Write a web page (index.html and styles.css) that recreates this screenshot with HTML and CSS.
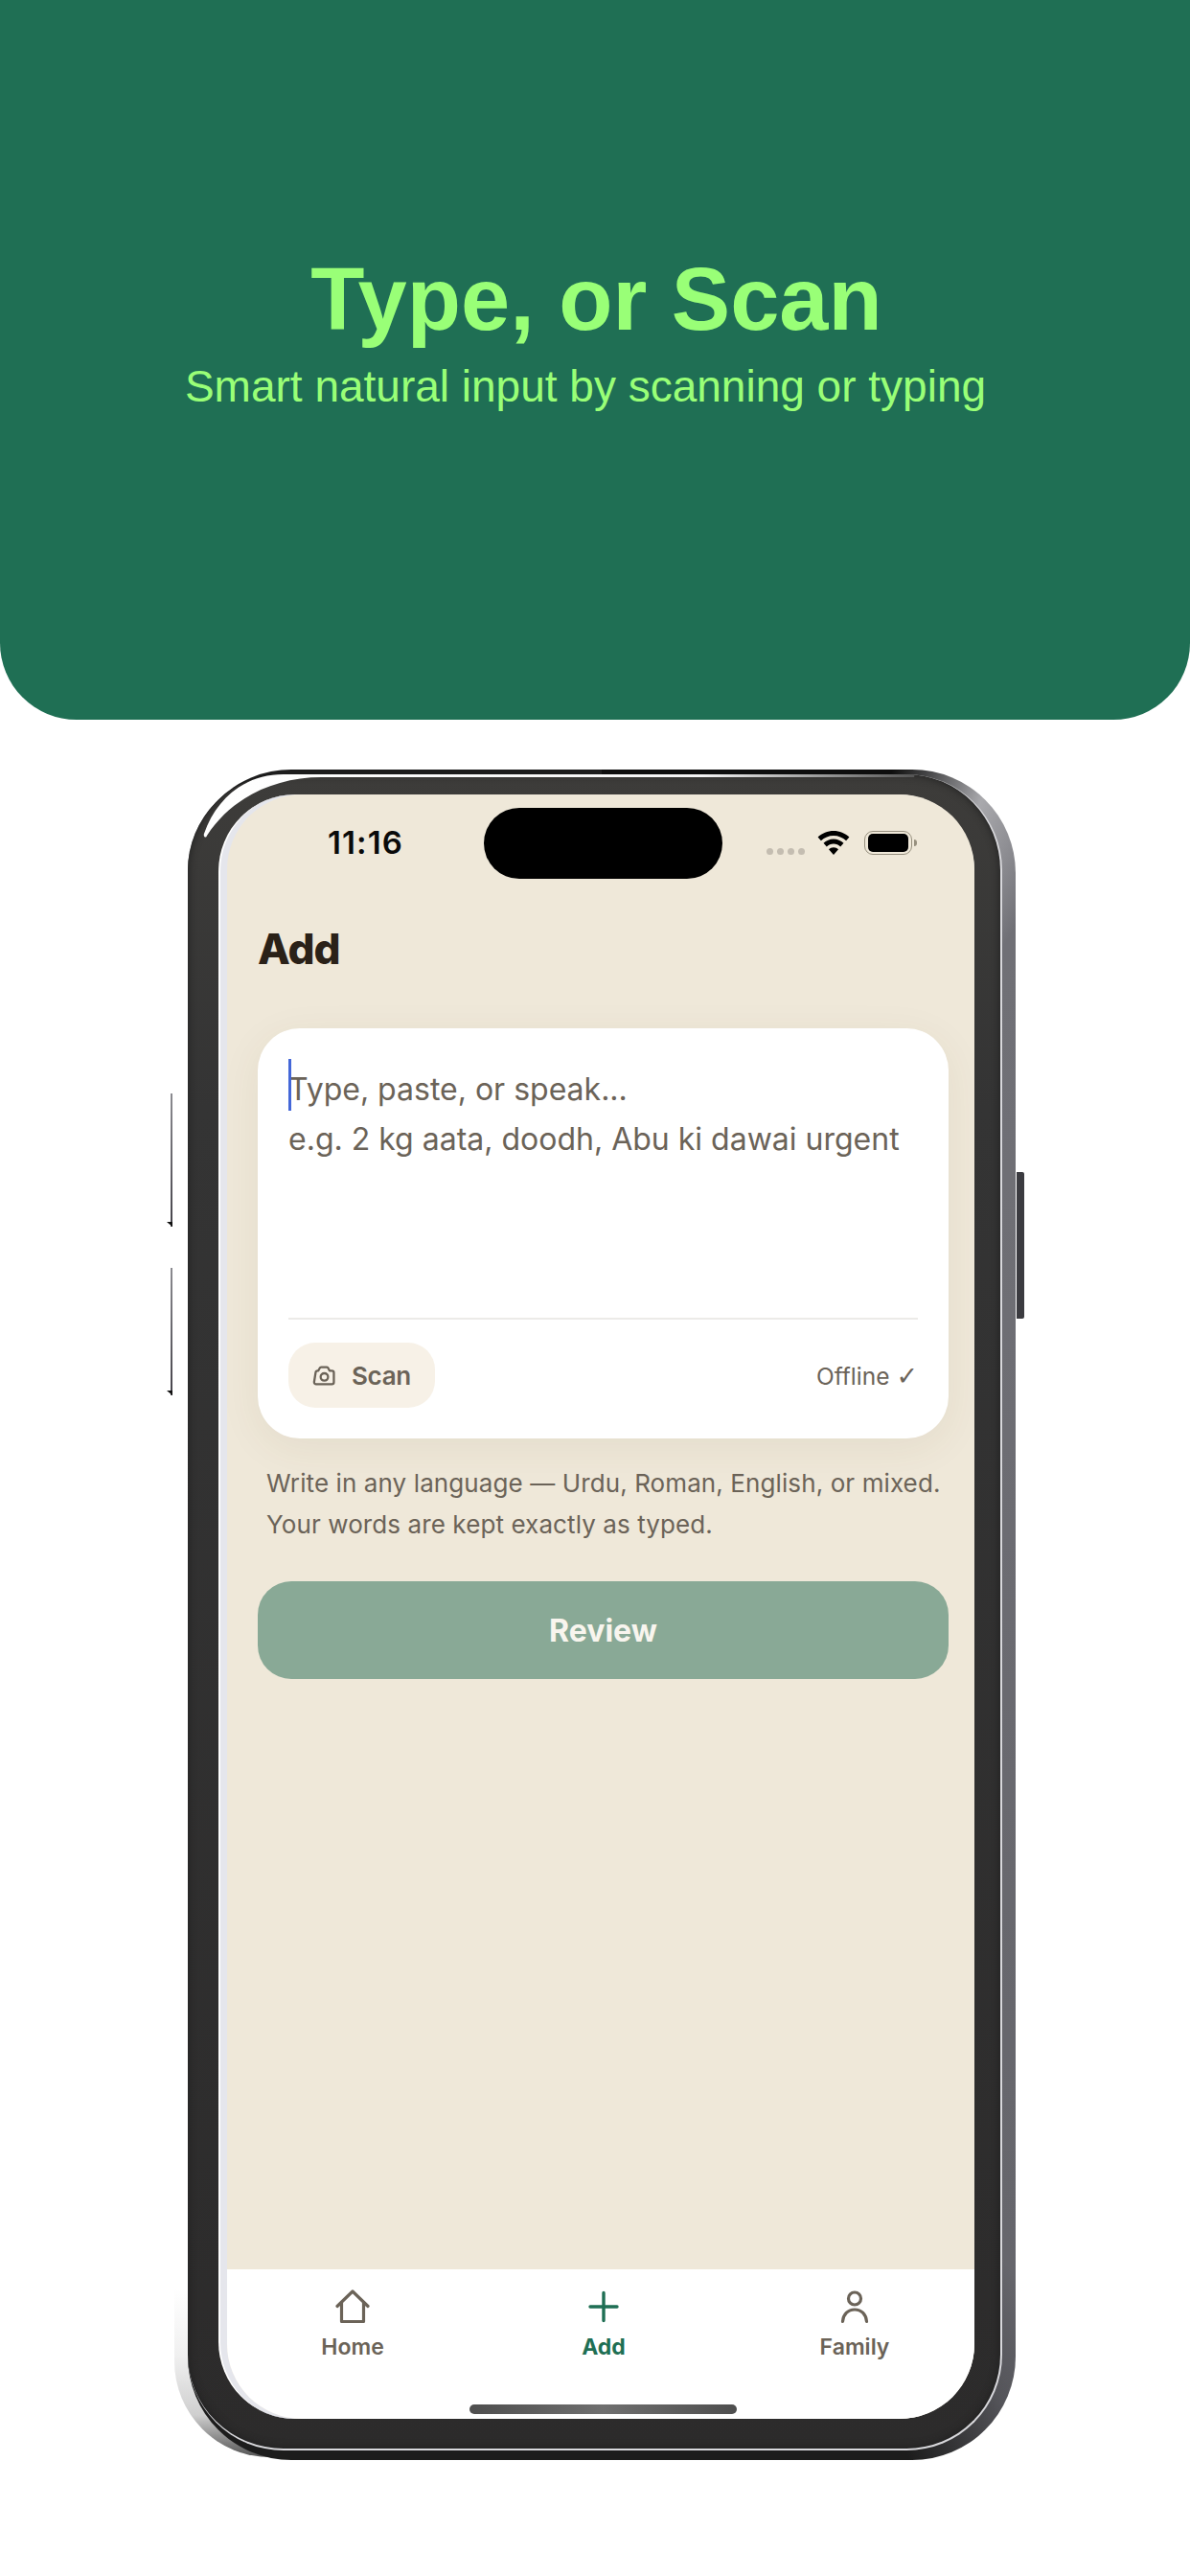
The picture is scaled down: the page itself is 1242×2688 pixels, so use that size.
FILE: index.html
```html
<!DOCTYPE html>
<html lang="en">
<head>
<meta charset="utf-8">
<title>Type, or Scan</title>
<link rel="stylesheet" href="styles.css">
</head>
<body>
<header class="hero">
  <h1 class="hero-title">Type, or Scan</h1>
  <p class="hero-sub">Smart natural input by scanning or typing</p>
</header>
<div class="phone">
  <div class="phone-halo"></div>
  <span class="side-btn side-btn-a"></span>
  <span class="side-btn side-btn-b"></span>
  <span class="power-btn"></span>
  <div class="rim">
    <div class="screen">
      <div class="display">
        <div class="status">
          <span class="time">11:16</span>
          <span class="island"></span>
          <span class="dots"><i></i><i></i><i></i><i></i></span>
          <svg class="wifi" viewBox="0 0 34 25"><path d="M17 0C10.700 0 5 2.400 .6 6.600l3.300 3.700C7.400 7 12 5 17 5s9.600 2 13.100 5.300l3.300-3.700C29 2.400 23.300 0 17 0z"/><path d="M17 8.600c-4 0-7.700 1.600-10.500 4.200l3.300 3.700c1.900-1.800 4.400-2.900 7.200-2.900s5.300 1.100 7.200 2.900l3.300-3.700C24.700 10.200 21 8.600 17 8.600z"/><path d="M17 17.300c-2 0-3.700.7-5 2l5 5.700 5-5.700c-1.300-1.300-3-2-5-2z"/></svg>
          <span class="battery"><i class="battery-fill"></i></span>
          <span class="battery-nub"></span>
        </div>
        <main class="page">
          <h2 class="page-title">Add</h2>
          <section class="card">
            <div class="entry">
              <span class="caret"></span>
              <p class="entry-line">Type, paste, or speak...</p>
              <p class="entry-line">e.g. 2 kg aata, doodh, Abu ki dawai urgent</p>
            </div>
            <div class="card-foot">
              <span class="scan-btn">
                <svg class="cam" viewBox="0 0 23 20" fill="none" stroke="currentColor" stroke-width="2.200" stroke-linejoin="round"><path d="M4 18.500h15.500a2 2 0 0 0 2-2V7a2 2 0 0 0-2-2h-2.300l-1.400-2.700a1.300 1.300 0 0 0-1.200-.8H8.800a1.600 1.600 0 0 0-1.400.9L6 5H5.300a2 2 0 0 0-2 1.700L1.800 16.200a2 2 0 0 0 2.200 2.300z"/><circle cx="12" cy="11.300" r="3.700"/></svg>
                <span>Scan</span>
              </span>
              <span class="offline">Offline <span class="tick">✓</span></span>
            </div>
          </section>
          <p class="hint">Write in any language — Urdu, Roman, English, or mixed.<br>Your words are kept exactly as typed.</p>
          <button class="review">Review</button>
        </main>
        <nav class="tabs">
          <div class="tab">
            <svg class="tab-icon" viewBox="0 0 38 36" fill="none" stroke="currentColor" stroke-width="3.200" stroke-linecap="round" stroke-linejoin="round"><path d="M3 17.500 19 2l16 15.500M7.500 14v19.500h23V14"/></svg>
            <span>Home</span>
          </div>
          <div class="tab tab-on">
            <svg class="tab-icon" viewBox="0 0 38 36" fill="none" stroke="currentColor" stroke-width="3.400" stroke-linecap="round"><path d="M19 3.500v29M5 18h28"/></svg>
            <span>Add</span>
          </div>
          <div class="tab">
            <svg class="tab-icon" viewBox="0 0 38 36" fill="none" stroke="currentColor" stroke-width="3.200" stroke-linecap="round"><circle cx="19" cy="9.500" r="6.500"/><path d="M6.500 33.500C7 26 12 21 19 21s12 5 12.500 12.500"/></svg>
            <span>Family</span>
          </div>
        </nav>
        <span class="home-bar"></span>
      </div>
    </div>
    <svg class="glint" viewBox="0 0 850 80" preserveAspectRatio="none"><defs><linearGradient id="gl" x1="0" x2="1" y1="0" y2="0"><stop offset="0" stop-color="#fff"/><stop offset=".7" stop-color="#f4f4f4"/><stop offset="1" stop-color="#555"/></linearGradient></defs><path d="M17 62C30 25 60 0 100 0H760V3H140C90 3 45 25 20 64c-1 3-4 1-3-2z" fill="url(#gl)"/></svg>
  </div>
</div>
</body>
</html>
```
FILE: styles.css
```css
* { box-sizing: border-box; }
html, body { margin: 0; padding: 0; }
body {
  width: 1242px;
  height: 2688px;
  background: #fff;
  overflow: hidden;
  font-family: Inter, "Noto Sans", sans-serif;
}

/* hero */
.hero {
  height: 751px;
  background: #1f6f54;
  border-radius: 0 0 80px 80px;
  padding-top: 262px;
  text-align: center;
  color: #99ff77;
  font-family: "Liberation Sans", Arial, sans-serif;
}
.hero-title {
  margin: 0;
  padding-left: 3px;
  font-size: 92px;
  line-height: 100px;
  font-weight: 700;
}
.hero-sub {
  margin: 13px 0 0;
  padding-right: 20px;
  font-size: 46px;
  line-height: 56px;
  font-weight: 400;
}

/* device */
.phone {
  position: relative;
  width: 864px;
  height: 1764px;
  margin: 52px 0 0 196px;
  padding: 5px 14px 10px 0;
  border-radius: 108px;
  background: conic-gradient(#0e0e0e 0 19deg, #a9a9ad 25deg, #707076 31deg, #66666c 148deg, #55555a 153deg, #1c1c1c 160deg, #1c1c1c 360deg);
}
.phone-halo {
  position: absolute;
  z-index: -1;
  left: -14px;
  top: 0;
  bottom: 3px;
  width: 300px;
  border-radius: 108px 0 0 100px;
  background: linear-gradient(to bottom, #fff 0, #fff 90%, #f0f0f0 94%, #cfcfcf 97.500%, #555 100%);
}
.side-btn {
  position: absolute;
  left: -18px;
  width: 2px;
  background: linear-gradient(to bottom, #8b8b90, #45434a);
}
.side-btn::after {
  content: "";
  position: absolute;
  left: -4px;
  bottom: 0;
  border-style: solid;
  border-width: 0 6px 5px 0;
  border-color: transparent #111 transparent transparent;
}
.side-btn-a { top: 338px; height: 139px; }
.side-btn-b { top: 520px; height: 133px; }
.power-btn {
  position: absolute;
  left: 865px;
  top: 420px;
  width: 8px;
  height: 153px;
  border-radius: 0 2px 2px 0;
  background: #3b3b40;
}
.rim {
  position: relative;
  height: 100%;
  padding: 21px 27px 31px 32px;
  border-radius: 100px;
  border-bottom: 2px solid #d8d8dc;
  border-right: 2px solid #d8d8dc;
  background: linear-gradient(to bottom, #3d3c3a, #343434 20%, #2c2b2b);
  box-shadow: inset 0 0 8px #1e1e1e;
}
.glint {
  position: absolute;
  left: 0;
  top: 0;
  width: 100%;
  height: 80px;
}
.screen {
  height: 100%;
  padding-left: 9px;
  border-radius: 80px;
  border-left: 2px solid #fff;
  background: #e5e6ec;
}
.display {
  position: relative;
  display: flex;
  flex-direction: column;
  height: 100%;
  margin-left: -2px;
  border-radius: 78px;
  overflow: hidden;
  background: #efe8d9;
}

/* status bar */
.status {
  display: flex;
  align-items: flex-start;
  height: 110px;
  padding: 14px 0 0 105px;
}
.time {
  width: 163px;
  margin-top: 16px;
  font-size: 33px;
  line-height: 40px;
  font-weight: 600;
  letter-spacing: 1.100px;
  color: #0a0a0a;
}
.island {
  flex: none;
  width: 249px;
  height: 74px;
  border-radius: 37px;
  background: #000;
}
.dots {
  display: flex;
  gap: 4px;
  margin: 42px 0 0 46px;
}
.dots i {
  width: 7px;
  height: 7px;
  border-radius: 50%;
  background: #c4bdb1;
}
.wifi {
  width: 34px;
  height: 25px;
  margin: 24px 0 0 13px;
  fill: #000;
}
.battery {
  width: 50px;
  height: 25px;
  margin: 24px 0 0 15px;
  padding: 2px 3px;
  border: 1.500px solid #97907f;
  border-radius: 9px;
}
.battery-fill {
  display: block;
  height: 100%;
  border-radius: 5px;
  background: #000;
}
.battery-nub {
  width: 3px;
  height: 7px;
  margin: 33px 0 0 2px;
  border-radius: 0 3px 3px 0;
  background: #97907f;
}

/* page */
.page {
  flex: 1;
  padding: 0 27px 0 32px;
}
.page-title {
  margin: 22px 0 0;
  font-size: 44px;
  line-height: 58px;
  font-weight: 800;
  letter-spacing: -1px;
  color: #2a2118;
}
.card {
  height: 428px;
  margin-top: 54px;
  padding: 32px 32px 32px;
  border-radius: 44px;
  background: #fff;
  box-shadow: 0 10px 44px rgba(90, 70, 30, .07);
}
.entry {
  position: relative;
  height: 272px;
  padding-top: 6px;
  border-bottom: 2px solid #ecebe8;
}
.caret {
  position: absolute;
  left: 0;
  top: 0;
  width: 3px;
  height: 54px;
  background: #4467d8;
}
.entry-line {
  margin: 0;
  font-size: 32px;
  line-height: 52px;
  color: #6b6358;
}
.card-foot {
  display: flex;
  align-items: center;
  justify-content: space-between;
  height: 68px;
  margin-top: 24px;
}
.scan-btn {
  display: flex;
  align-items: center;
  gap: 17px;
  height: 68px;
  padding: 0 25px;
  border-radius: 28px;
  background: #f7f1e7;
  font-size: 26px;
  font-weight: 600;
  letter-spacing: -.3px;
  color: #6b6358;
}
.cam { width: 24px; height: 21px; }
.offline {
  font-size: 24.500px;
  color: #6b6358;
}
.tick { font-size: 27px; font-family: "DejaVu Sans", sans-serif; }
.hint {
  margin: 25px 0 0 9px;
  font-size: 26px;
  line-height: 43px;
  letter-spacing: .1px;
  color: #6b6358;
}
.review {
  display: block;
  width: 100%;
  height: 102px;
  margin-top: 38px;
  border: 0;
  border-radius: 35px;
  background: #89a996;
  color: #f8f5ee;
  font: 700 32px Inter, "Noto Sans", sans-serif;
}

/* tabs */
.tabs {
  display: grid;
  grid-template-columns: repeat(3, 262px);
  height: 156px;
  padding-top: 21px;
  background: #fff;
}
.tab {
  display: flex;
  flex-direction: column;
  align-items: center;
  gap: 10px;
  font-size: 23px;
  line-height: 28px;
  font-weight: 600;
  color: #6b6358;
}
.tab-on { color: #1f6f54; font-weight: 700; }
.tab-icon { width: 38px; height: 36px; }
.home-bar {
  position: absolute;
  left: 253px;
  bottom: 5px;
  width: 279px;
  height: 10px;
  border-radius: 5px;
  background: linear-gradient(to right, #4e4e4e, #6f6f6f 50%, #4e4e4e);
}
```
